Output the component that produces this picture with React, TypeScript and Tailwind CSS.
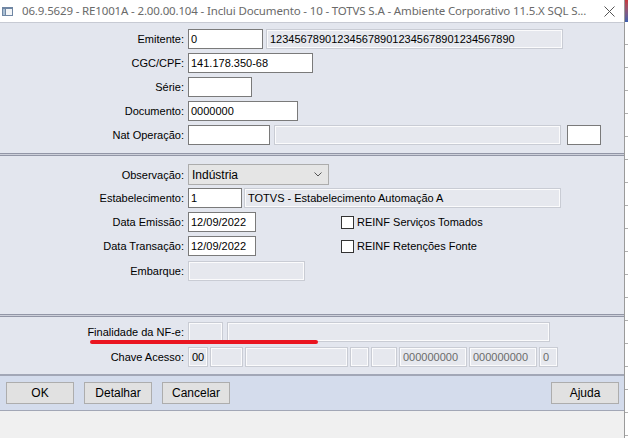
import React from "react";

const font = { fontFamily: '"Liberation Sans", Arial, sans-serif' };

function Label({ children }: { children: React.ReactNode }) {
  return <div className="w-[184px] shrink-0 text-right pr-0 leading-[20px]">{children}</div>;
}

function Input({ w, value = "", h = "h-[20px]" }: { w: string; value?: string; h?: string }) {
  return (
    <div className={`${w} ${h} shrink-0 bg-white border border-[#7a7a7a] px-[2px] leading-[18px] whitespace-nowrap overflow-hidden`}>
      {value}
    </div>
  );
}

function ReadOnly({ w, value = "", muted = false }: { w: string; value?: string; muted?: boolean }) {
  return (
    <div
      className={`${w} h-[20px] shrink-0 bg-[#e6e8ee] border border-[#c9ccd4] shadow-[inset_0_0_0_1px_#fbfbfc] px-[3px] leading-[18px] whitespace-nowrap overflow-hidden ${
        muted ? "text-[#6b6b6b]" : "text-black"
      }`}
    >
      {value}
    </div>
  );
}

function Checkbox({ label }: { label: string }) {
  return (
    <div className="flex items-center gap-[3px] ml-[81px]">
      <div className="w-[13px] h-[13px] bg-white border border-[#333]" />
      <span>{label}</span>
    </div>
  );
}

function Separator() {
  return (
    <div className="flex flex-col">
      <div className="h-px bg-[#9296a6]" />
      <div className="h-px bg-[#cdd0da]" />
      <div className="h-px bg-[#9296a6]" />
    </div>
  );
}

function Button({ label }: { label: string }) {
  return (
    <div className="w-[68px] h-[22px] bg-[#e1e1e1] border border-[#adadad] flex items-center justify-center text-[12px]">
      {label}
    </div>
  );
}

export default function App() {
  return (
    <div className="w-[628px] h-[438px] flex overflow-hidden text-[11px] text-black" style={font}>
      <div className="w-[625px] flex flex-col border-r border-[#9a9a9a] relative">
        {/* Title bar */}
        <div className="h-[23px] bg-white border-b border-[#c7cad3] flex items-center shrink-0">
          <svg width="11" height="9" viewBox="0 0 11 9" className="ml-[2px] mr-[9px] shrink-0">
            <rect x="0" y="0" width="11" height="9" fill="#6f86a3" />
            <rect x="4" y="2" width="6" height="6" fill="#f3f5f7" />
            <rect x="1" y="2" width="2" height="6" fill="#a9bfd4" />
          </svg>
          <span
            className="text-[11.5px] tracking-[-0.15px] text-[#6a6a6a] whitespace-nowrap overflow-hidden"
            style={{ fontFamily: '"Noto Sans", "Open Sans", sans-serif' }}
          >
            06.9.5629 - RE1001A - 2.00.00.104 - Inclui Documento - 10 - TOTVS S.A - Ambiente Corporativo 11.5.X SQL S...
          </span>
          <svg width="11" height="11" viewBox="0 0 11 11" className="ml-auto mr-[9px] shrink-0">
            <path d="M0.5 0.5 L10.5 10.5 M10.5 0.5 L0.5 10.5" stroke="#555" strokeWidth="1" />
          </svg>
        </div>

        {/* Section 1 */}
        <div className="bg-[#e3e6ee] pt-[6px] pb-[8px] flex flex-col gap-[4px]">
          <div className="flex items-center gap-[4px]">
            <Label>Emitente:</Label>
            <Input w="w-[75px]" value="0" />
            <ReadOnly w="w-[297px] ml-[-1px]" value="1234567890123456789012345678901234567890" />
          </div>
          <div className="flex items-center gap-[4px]">
            <Label>CGC/CPF:</Label>
            <Input w="w-[125px]" value="141.178.350-68" />
          </div>
          <div className="flex items-center gap-[4px]">
            <Label>Série:</Label>
            <Input w="w-[64px]" />
          </div>
          <div className="flex items-center gap-[4px]">
            <Label>Documento:</Label>
            <Input w="w-[110px]" value="0000000" />
          </div>
          <div className="flex items-center gap-[4px]">
            <Label>Nat Operação:</Label>
            <Input w="w-[82px]" />
            <ReadOnly w="w-[287px]" />
            <Input w="w-[34px] ml-[2px]" />
          </div>
        </div>
        <Separator />

        {/* Section 2 */}
        <div className="bg-[#e3e6ee] pt-[8px] pb-[33px] flex flex-col">
          <div className="flex items-center gap-[4px]">
            <Label>Observação:</Label>
            <div className="w-[141px] h-[21px] bg-[#e5e5e5] border border-[#acacac] flex items-center px-[3px] text-[12px]">
              <span>Indústria</span>
              <svg width="8" height="5" viewBox="0 0 8 5" className="ml-auto mr-[3px]">
                <path d="M0.5 0.5 L4 4 L7.5 0.5" stroke="#555" fill="none" strokeWidth="1" />
              </svg>
            </div>
          </div>
          <div className="flex items-center gap-[4px] mt-[3px]">
            <Label>Estabelecimento:</Label>
            <Input w="w-[54px]" value="1" />
            <ReadOnly w="w-[317px] ml-[-2px]" value="TOTVS - Estabelecimento Automação A" />
          </div>
          <div className="flex items-center gap-[4px] mt-[4px]">
            <Label>Data Emissão:</Label>
            <Input w="w-[68px]" value="12/09/2022" />
            <Checkbox label="REINF Serviços Tomados" />
          </div>
          <div className="flex items-center gap-[4px] mt-[4px]">
            <Label>Data Transação:</Label>
            <Input w="w-[68px]" value="12/09/2022" />
            <Checkbox label="REINF Retenções Fonte" />
          </div>
          <div className="flex items-center gap-[4px] mt-[5px]">
            <Label>Embarque:</Label>
            <ReadOnly w="w-[117px]" />
          </div>
        </div>
        <Separator />

        {/* Section 3 */}
        <div className="bg-[#e3e6ee] pt-[5px] pb-[7px] flex flex-col gap-[5px] relative">
          <div className="flex items-center gap-[4px]">
            <Label>Finalidade da NF-e:</Label>
            <ReadOnly w="w-[35px]" />
            <ReadOnly w="w-[323px]" />
          </div>
          <div className="flex items-center gap-[2px]">
            <div className="w-[184px] shrink-0 text-right leading-[20px] mr-[2px]">Chave Acesso:</div>
            <ReadOnly w="w-[20px]" value="00" />
            <ReadOnly w="w-[33px]" />
            <ReadOnly w="w-[103px]" />
            <ReadOnly w="w-[19px]" />
            <ReadOnly w="w-[26px]" />
            <ReadOnly w="w-[68px]" value="000000000" muted />
            <ReadOnly w="w-[68px]" value="000000000" muted />
            <ReadOnly w="w-[19px]" value="0" muted />
          </div>
          {/* red annotation */}
          <div className="absolute left-[90px] top-[23px] w-[228px] h-[4px] rounded-full bg-[#ea1520]" />
        </div>

        {/* Button bar */}
        <div className="bg-[#d4dcec] border-t-2 border-b border-[#a2a7b6] h-[37px] flex items-center px-[6px] gap-[10px] shrink-0">
          <Button label="OK" />
          <Button label="Detalhar" />
          <Button label="Cancelar" />
          <div className="ml-auto mr-[-1px]">
            <Button label="Ajuda" />
          </div>
        </div>
        <div className="flex-1 bg-[#f0f0f0]" />
      </div>

      {/* window behind */}
      <div className="flex-1 flex flex-col bg-white">
        <div className="h-[22px] bg-gradient-to-b from-[#c8343a] to-[#3a5fb0]" />
        <div className="flex-1 bg-[repeating-linear-gradient(to_bottom,#ffffff_0px,#ffffff_22px,#b0b0b0_22px,#b0b0b0_23px)]" />
      </div>
    </div>
  );
}
